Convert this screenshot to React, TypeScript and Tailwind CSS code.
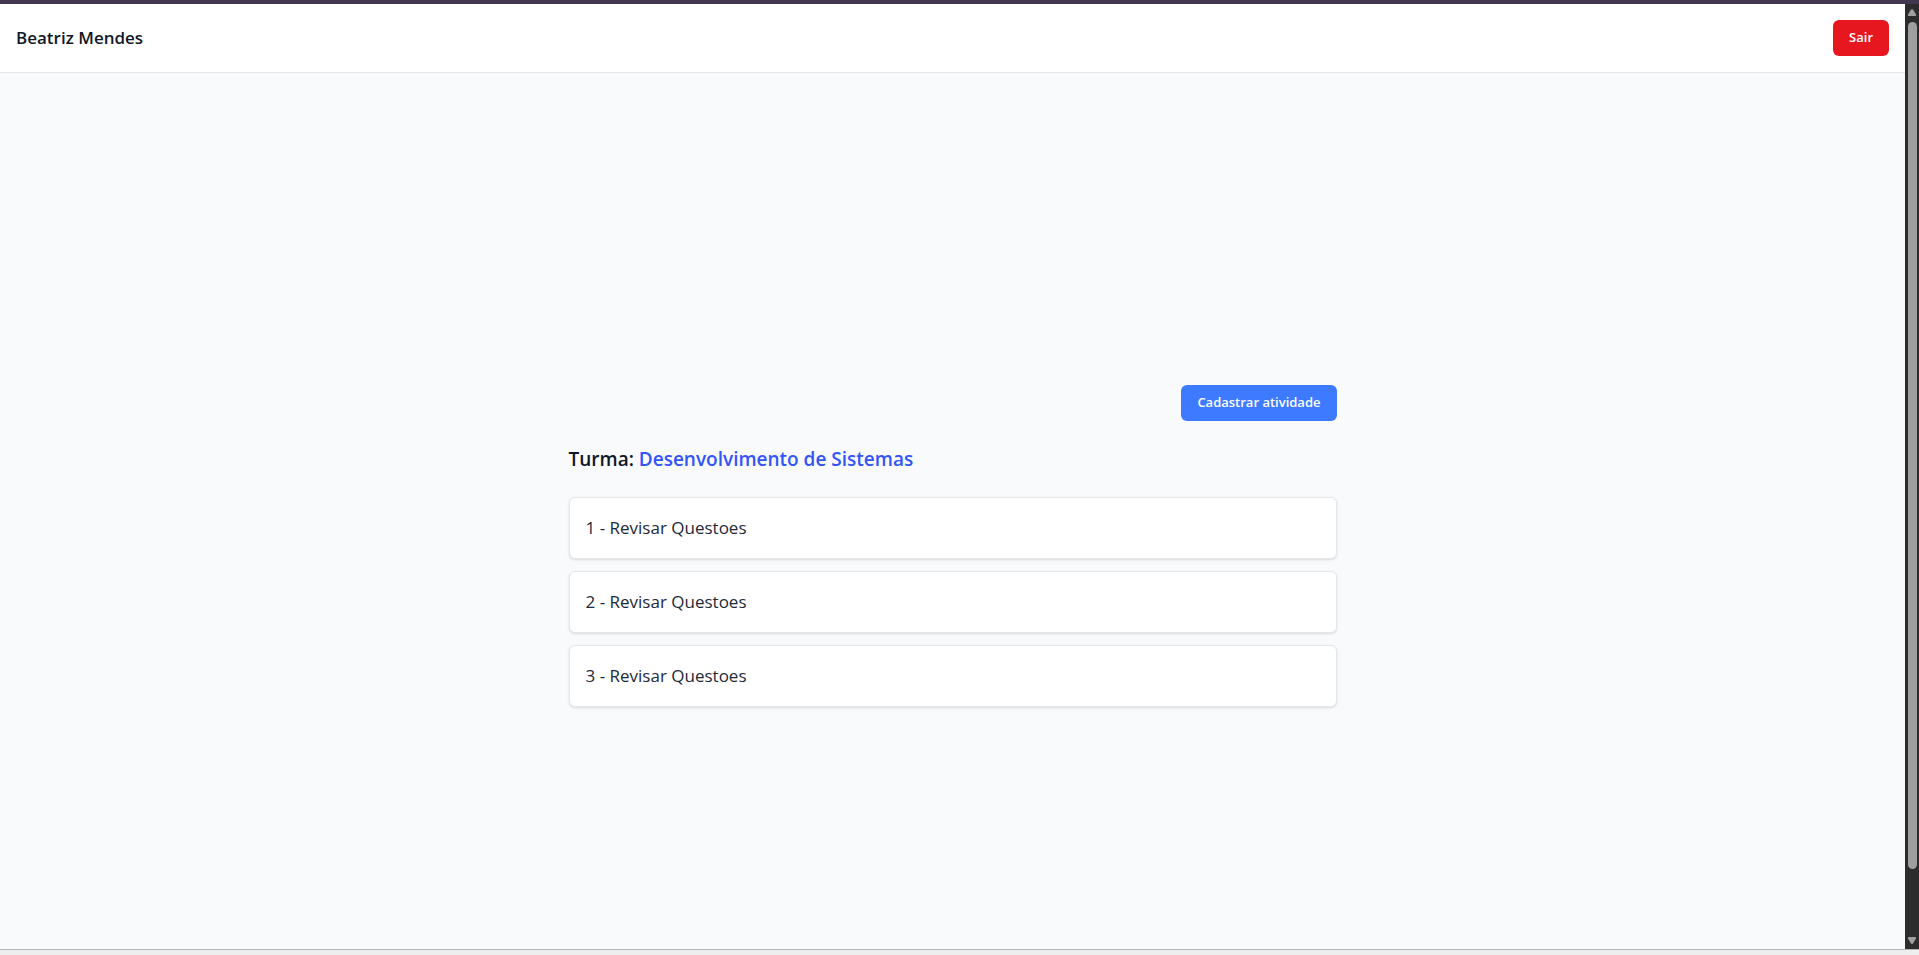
const activities = [
  { id: 1, title: "Revisar Questoes" },
  { id: 2, title: "Revisar Questoes" },
  { id: 3, title: "Revisar Questoes" },
];

function ScrollTrack() {
  return (
    <div aria-hidden="true" className="flex w-[14px] shrink-0 flex-col items-center bg-[#2c2c2c] py-1 text-[#9f9f9f]">
      <svg width="10" height="9" viewBox="0 0 10 9" fill="currentColor">
        <path d="M4 1.6Q5 .4 6 1.6L9 6.4Q9.400 8 8.500 8H1.500Q.6 8 1 6.400Z" />
      </svg>
      <div className="flex w-full flex-1 flex-col items-center pt-[5px] pb-[67px]">
        <div className="w-[9px] flex-1 rounded-full bg-[#9f9f9f]" />
      </div>
      <svg width="10" height="9" viewBox="0 0 10 9" fill="currentColor">
        <path d="M4 7.400Q5 8.600 6 7.400L9 2.600Q9.400 1 8.500 1H1.500Q.6 1 1 2.600Z" />
      </svg>
    </div>
  );
}

export default function App() {
  return (
    <div className="flex h-screen flex-col border-t-4 border-[#41384d] bg-[#f9fafc] font-['Open_Sans','Noto_Sans',sans-serif] text-gray-900">
      <div className="flex min-h-0 flex-1">
        <div className="min-w-0 flex-1 overflow-hidden">
          <header className="flex items-center justify-between border-b border-gray-200 bg-white p-4">
            <span className="text-[17px] leading-7 font-semibold">Beatriz Mendes</span>
            <button type="button" className="h-9 rounded-md bg-[#e7171f] px-4 text-[13px] font-semibold text-white">
              Sair
            </button>
          </header>
          <main className="flex min-h-[calc(100vh-10px)] flex-col items-center justify-center">
            <section className="flex w-full max-w-3xl flex-col gap-6">
              <button type="button" className="h-9 self-end rounded-md bg-[#3d7aff] px-4 text-[13px] font-semibold text-white">
                Cadastrar atividade
              </button>
              <h1 className="text-[19px] leading-7 font-semibold">
                Turma: <span className="text-[#3355f8]">Desenvolvimento de Sistemas</span>
              </h1>
              <ul className="flex flex-col gap-3">
                {activities.map(({ id, title }) => (
                  <li
                    key={id}
                    className="rounded-md border border-gray-200 bg-white p-4 text-[17px] leading-7 text-gray-800 shadow-sm"
                  >
                    {id} - {title}
                  </li>
                ))}
              </ul>
            </section>
          </main>
        </div>
        <ScrollTrack />
      </div>
      <div className="h-[6px] shrink-0 border-t border-[#b5b5b8] bg-[#eeeeee]" />
    </div>
  );
}
